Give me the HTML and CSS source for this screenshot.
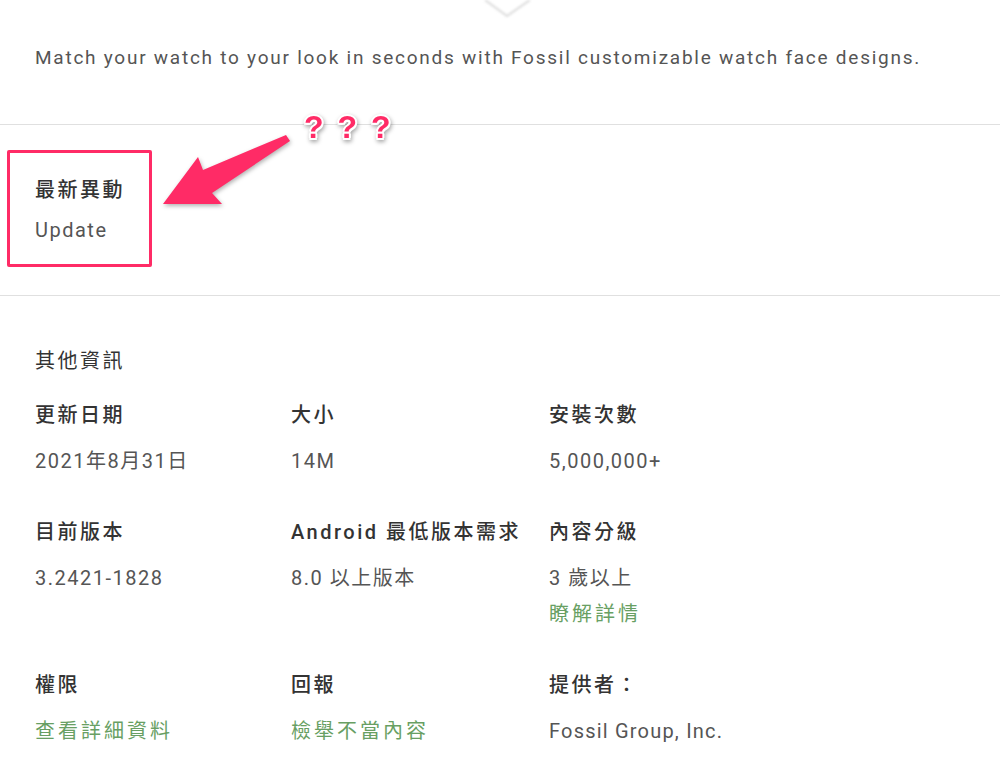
FILE: index.html
```html
<!DOCTYPE html>
<html lang="zh-Hant">
<head>
  <meta charset="UTF-8">
  <meta name="viewport" content="width=device-width, initial-scale=1.0">
  <title>Fossil 錶面 - 其他資訊</title>
  <link rel="stylesheet" href="styles.css">
</head>
<body>

  <!-- 上方說明框的箭頭 -->
  <div class="pointer">
    <svg width="50" height="20" viewBox="0 0 50 20">
      <polyline points="1,0 23,16 46,0" fill="#fff" stroke="#e2e2e2" stroke-width="2.5" />
    </svg>
  </div>

  <p class="desc">Match your watch to your look in seconds with Fossil customizable watch face designs.</p>

  <div class="section update">
    <div class="label">最新異動</div>
    <div class="value latin">Update</div>

    <!-- 標註 -->
    <div class="mark-box"></div>
    <svg class="mark-arrow" width="300" height="100" viewBox="0 0 300 100">
      <polygon points="163,79 198,32 203,45 286,10 290,16 212,68 222,79" fill="#ff2b66" />
    </svg>
    <div class="mark-q">
      <span>?</span><span>?</span><span>?</span>
    </div>
  </div>

  <div class="section info">
    <h2 class="title">其他資訊</h2>

    <div class="grid">
      <div class="cell">
        <div class="label">更新日期</div>
        <div class="value">2021年8月31日</div>
      </div>
      <div class="cell">
        <div class="label">大小</div>
        <div class="value">14M</div>
      </div>
      <div class="cell">
        <div class="label">安裝次數</div>
        <div class="value">5,000,000+</div>
      </div>

      <div class="cell">
        <div class="label">目前版本</div>
        <div class="value">3.2421-1828</div>
      </div>
      <div class="cell">
        <div class="label">Android 最低版本需求</div>
        <div class="value">8.0 以上版本</div>
      </div>
      <div class="cell">
        <div class="label">內容分級</div>
        <div class="value">3 歲以上</div>
        <a class="link more" href="#">瞭解詳情</a>
      </div>

      <div class="cell">
        <div class="label">權限</div>
        <a class="value link" href="#">查看詳細資料</a>
      </div>
      <div class="cell">
        <div class="label">回報</div>
        <a class="value link" href="#">檢舉不當內容</a>
      </div>
      <div class="cell">
        <div class="label">提供者：</div>
        <div class="value provider">Fossil Group, Inc.</div>
      </div>
    </div>
  </div>

</body>
</html>
```

FILE: styles.css
```css
/* 基本樣式 */
body {
  margin: 0;
  padding: 0;
  background-color: #fff;
  font-family: Roboto, "Noto Sans CJK TC", sans-serif;
  color: #333;
}

.pointer {
  height: 20px;
  padding-left: 484px;
}

.pointer svg {
  display: block;
  filter: blur(0.8px);
}

.desc {
  margin: 26px 0 54px;
  padding-left: 35px;
  font-size: 19px;
  line-height: 24px;
  letter-spacing: 1.75px;
  color: #555;
}

/* 區塊 */
.section {
  border-top: 1px solid #e0e0e0;
  padding-left: 35px;
}

.label {
  font-size: 20px;
  line-height: 28px;
  font-weight: 500;
  letter-spacing: 2.5px;
  color: #333;
}

.value {
  display: block;
  margin-top: 18px;
  font-size: 20px;
  line-height: 28px;
  letter-spacing: 1.5px;
  color: #555;
}

.provider {
  letter-spacing: 1.2px;
}

.link {
  color: #689f63;
  text-decoration: none;
  letter-spacing: 3px;
}

.more {
  display: block;
  margin-top: 8px;
  font-size: 20px;
  line-height: 28px;
}

/* 最新異動 */
.update {
  position: relative;
  padding-top: 51px;
  padding-bottom: 51px;
}

.update .value {
  margin-top: 12px;
}

.mark-box {
  position: absolute;
  left: 7px;
  top: 25px;
  width: 139px;
  height: 111px;
  border: 3.5px solid #ff2b66;
  border-radius: 2px;
}

.mark-arrow {
  position: absolute;
  left: 0;
  top: 0;
  filter: drop-shadow(1px 2px 2px rgba(0, 0, 0, 0.3));
}

.mark-q {
  position: absolute;
  left: 304px;
  top: -14px;
  display: flex;
  gap: 14px;
  font-family: "Liberation Sans", Arial, sans-serif;
  font-size: 32px;
  line-height: 32px;
  font-weight: bold;
  color: #ff2b66;
  text-shadow:
    2px 0 0 #fff, -2px 0 0 #fff, 0 2px 0 #fff, 0 -2px 0 #fff,
    1.5px 1.5px 0 #fff, -1.5px 1.5px 0 #fff, 1.5px -1.5px 0 #fff, -1.5px -1.5px 0 #fff;
  filter: drop-shadow(1px 2px 2px rgba(0, 0, 0, 0.35));
}

/* 其他資訊 */
.info {
  padding-top: 51px;
  padding-bottom: 40px;
}

.title {
  margin: 0 0 26px;
  font-size: 20px;
  line-height: 28px;
  font-weight: normal;
  letter-spacing: 2.5px;
  color: #333;
}

.grid {
  display: grid;
  grid-template-columns: 256px 258px 1fr;
  row-gap: 43px;
}
```
